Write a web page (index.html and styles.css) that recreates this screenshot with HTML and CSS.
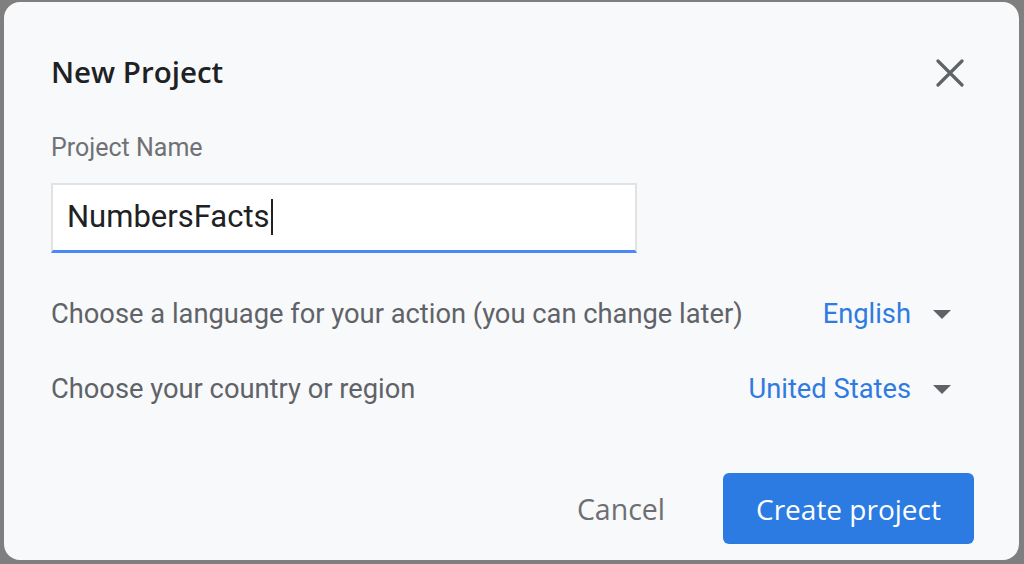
FILE: index.html
```html
<!DOCTYPE html>
<html>
<head>
<meta charset="utf-8">
<link rel="stylesheet" href="styles.css">
</head>
<body>
<div class="dialog">
  <div class="header">
    <h1 class="title">New Project</h1>
    <button class="close" aria-label="Close">
      <svg width="28" height="28" viewBox="0 0 28 28"><path d="M2 2 L26 26 M26 2 L2 26" stroke="#5f6368" stroke-width="3.2" stroke-linecap="round" fill="none"/></svg>
    </button>
  </div>
  <div class="label">Project Name</div>
  <div class="input"><span class="value">NumbersFacts</span><span class="caret"></span></div>
  <div class="row row-lang">
    <span class="row-text">Choose a language for your action (you can change later)</span>
    <span class="select"><span class="select-value">English</span><span class="tri"></span></span>
  </div>
  <div class="row row-country">
    <span class="row-text">Choose your country or region</span>
    <span class="select"><span class="select-value">United States</span><span class="tri"></span></span>
  </div>
  <div class="actions">
    <button class="btn-cancel">Cancel</button>
    <button class="btn-create">Create project</button>
  </div>
</div>
</body>
</html>
```

FILE: styles.css
```css
html, body {
  margin: 0;
  padding: 0;
}
body {
  width: 1024px;
  height: 564px;
  background: #7f7f7f;
  overflow: hidden;
  padding: 2px 5px 4px 4px;
  box-sizing: border-box;
}
.dialog {
  height: 558px;
  background: #f8f9fa;
  border-radius: 16px;
  box-sizing: border-box;
  padding: 0 45px 0 47px;
  display: flex;
  flex-direction: column;
  font-family: Roboto, "Liberation Sans", sans-serif;
}
.header {
  height: 136px;
  display: flex;
  justify-content: space-between;
  align-items: flex-start;
}
.title {
  margin: 50px 0 0 0;
  font-family: "Open Sans", Roboto, sans-serif;
  font-weight: 600;
  font-size: 29.5px;
  line-height: 40px;
  color: #202124;
}
.close {
  margin: 57px 10px 0 0;
  padding: 0;
  border: none;
  background: none;
  width: 28px;
  height: 28px;
  display: flex;
}
.label {
  font-size: 25px;
  line-height: 30px;
  color: #6f7175;
  margin-top: -5px;
  height: 50px;
}
.input {
  width: 586px;
  height: 70px;
  box-sizing: border-box;
  background: #fff;
  border: 2px solid #e2e2e2;
  border-bottom: 3px solid #4a8af4;
  display: flex;
  align-items: center;
  padding-left: 14px;
  padding-bottom: 2px;
}
.value {
  font-size: 31px;
  color: #202124;
}
.caret {
  width: 2px;
  height: 36px;
  background: #202124;
  margin-left: 1px;
}
.row {
  display: flex;
  justify-content: space-between;
  align-items: center;
  height: 40px;
  padding-right: 23px;
}
.row-lang { margin-top: 41px; }
.row-country { margin-top: 35px; }
.row-text {
  font-size: 27.3px;
  color: #5f6368;
}
.select {
  display: flex;
  align-items: center;
}
.select-value {
  font-size: 27.3px;
  color: #2f7be2;
}
.tri {
  width: 0;
  height: 0;
  border-left: 9px solid transparent;
  border-right: 9px solid transparent;
  border-top: 9px solid #5f6368;
  margin-left: 22px;
}
.actions {
  margin-top: 64px;
  display: flex;
  justify-content: flex-end;
  align-items: center;
}
.btn-cancel {
  border: none;
  background: none;
  font-family: "Open Sans", Roboto, sans-serif;
  font-weight: 500;
  font-size: 28.5px;
  color: #6d6f73;
  padding: 0;
  margin-right: 58px;
}
.btn-create {
  width: 251px;
  height: 71px;
  border: none;
  border-radius: 6px;
  background: #2b7be3;
  color: #fff;
  font-family: "Open Sans", Roboto, sans-serif;
  font-weight: 500;
  font-size: 28px;
  padding: 0;
}
```
